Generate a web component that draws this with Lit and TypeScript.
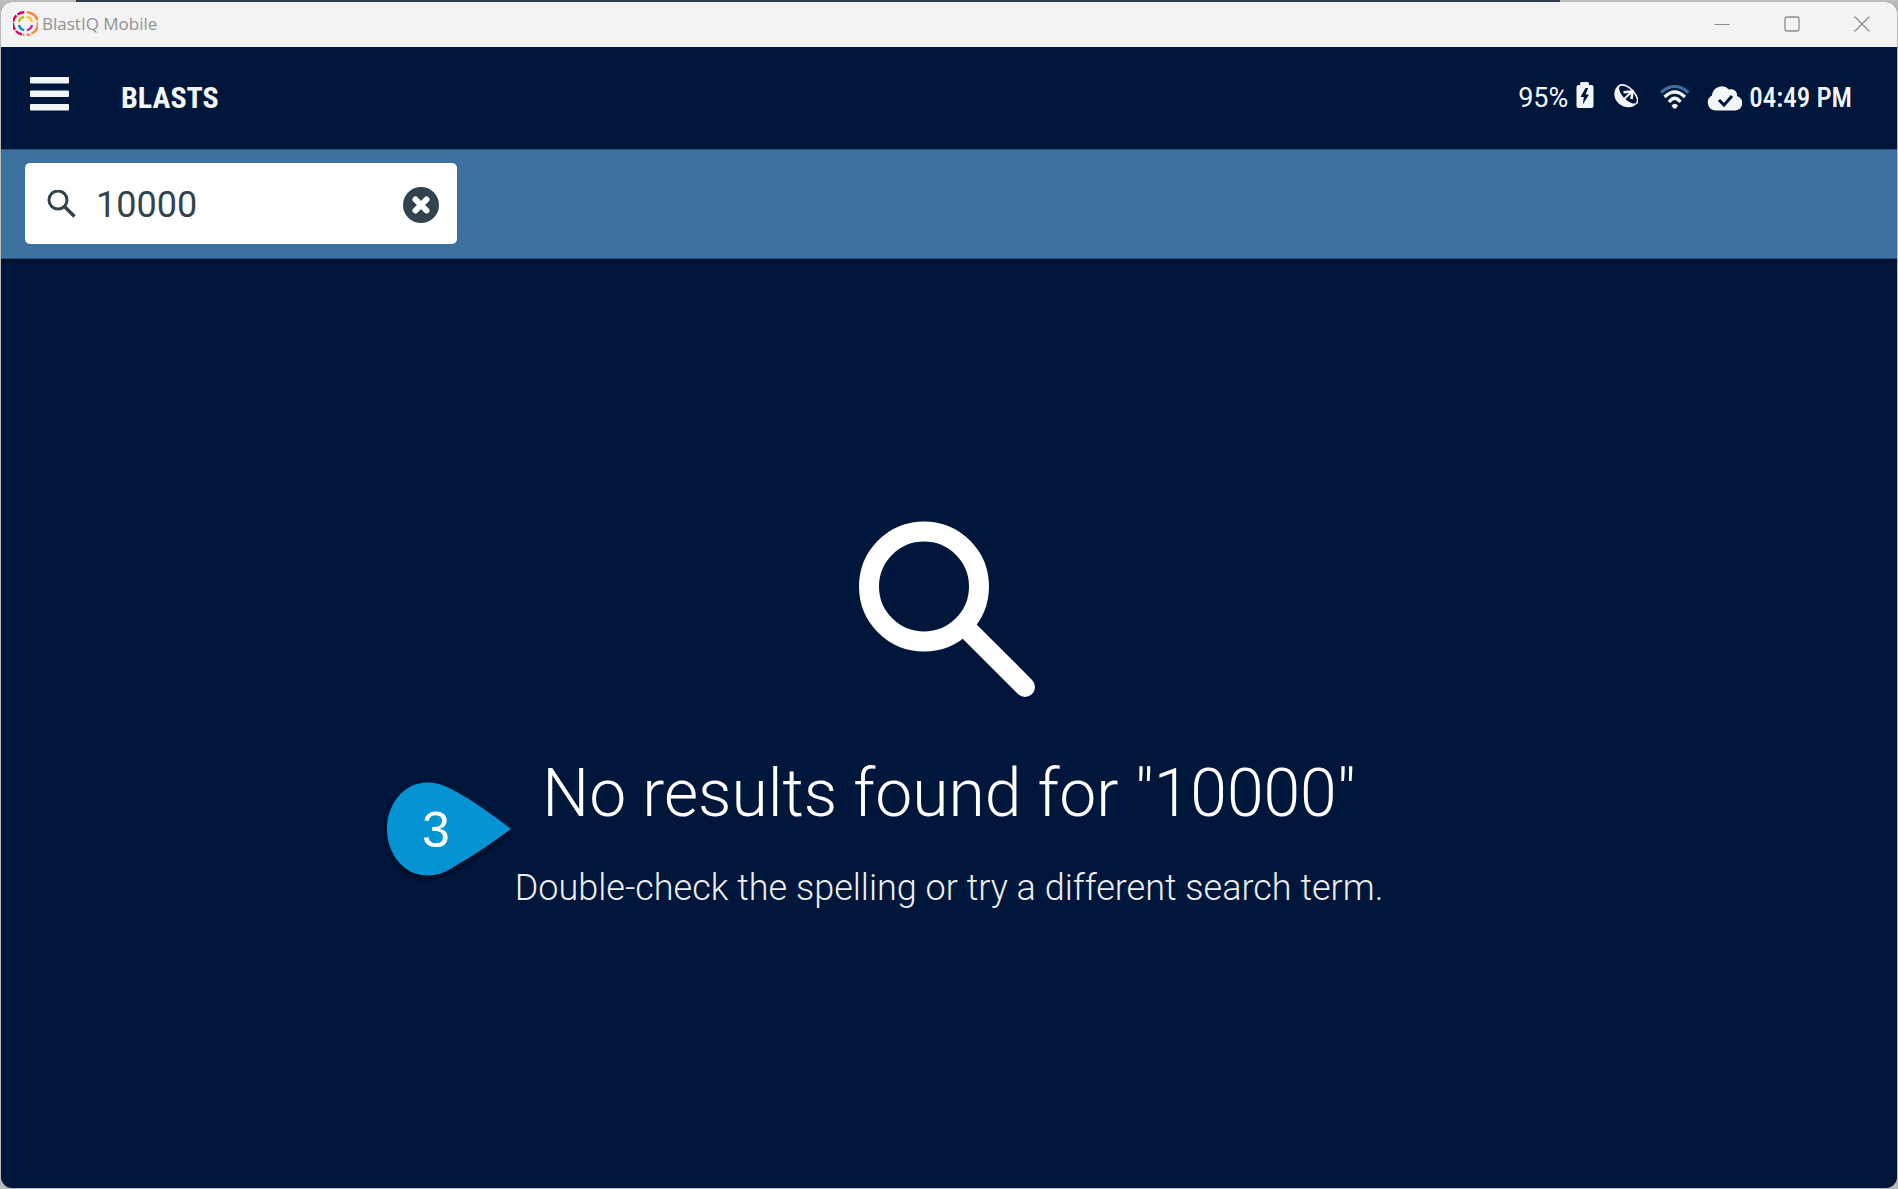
import { LitElement, html, css, svg } from "lit";
import { customElement, state } from "lit/decorators.js";

@customElement("window-title-bar")
class WindowTitleBar extends LitElement {
  static styles = css`
    :host {
      display: flex;
      align-items: center;
      justify-content: space-between;
      height: 45px;
      padding-left: 12px;
      background: #f3f3f3;
      color: #929292;
      font-family: "Open Sans", "Noto Sans", sans-serif;
      font-size: 17px;
      line-height: 24px;
    }
    .brand { display: flex; align-items: center; gap: 4px; padding-bottom: 2px; }
    .buttons { display: flex; padding-bottom: 2px; }
    button {
      display: grid;
      place-items: center;
      width: 70px;
      height: 43px;
      padding: 0;
      border: 0;
      background: none;
      color: #8d8d8d;
    }
    svg { display: block; }
  `;

  private control(label: string, shape: unknown) {
    return html`<button type="button" aria-label=${label}>
      <svg width="16" height="16" viewBox="0 0 16 16" fill="none" stroke="currentColor">${shape}</svg>
    </button>`;
  }

  render() {
    return html`
      <div class="brand">
        <svg width="25" height="25" viewBox="0 0 25 25" fill="none" stroke-width="2.4">
          <path d="M11.300 1.200A11.300 11.300 0 0 0 11.300 23.800" stroke="#d6045c" stroke-dasharray="7.200 1.400" />
          <path d="M13.700 1.200A11.300 11.300 0 0 1 13.700 23.800" stroke="#ff8236" stroke-dasharray="14.500 1.400" />
          <path d="M11.200 5.900A6.600 6.600 0 0 0 6 11" stroke="#b5bd00" />
          <path d="M13.800 5.900A6.600 6.600 0 0 1 19 11" stroke="#ffc629" />
          <path d="M11.200 19.100A6.600 6.600 0 0 1 6 14" stroke="#0092cf" />
          <path d="M13.800 19.100A6.600 6.600 0 0 0 19 14" stroke="#b62fa5" />
        </svg>
        <span>BlastIQ Mobile</span>
      </div>
      <div class="buttons">
        ${this.control("Minimize", svg`<path d="M0.500 8.500h15" />`)}
        ${this.control("Maximize", svg`<rect x="1" y="1" width="14" height="14" rx="1.500" stroke-width="1.300" />`)}
        ${this.control("Close", svg`<path d="M0.500 0.500l15 15M15.500 0.500l-15 15" stroke-width="1.300" />`)}
      </div>
    `;
  }
}

@customElement("status-header")
class StatusHeader extends LitElement {
  static styles = css`
    :host {
      display: flex;
      align-items: center;
      justify-content: space-between;
      height: 102px;
      padding: 0 45px 0 28px;
      color: #f2f6f8;
      font-family: "Roboto Condensed", Roboto, sans-serif;
    }
    .left { display: flex; align-items: center; gap: 52px; }
    button { padding: 0; border: 0; background: none; color: inherit; margin-bottom: 8px; }
    h1 { margin: 0; font-size: 30px; line-height: 32px; font-weight: 700; }
    .status { display: flex; align-items: center; font-size: 27px; line-height: 32px; font-weight: 500; }
    .percent { font-family: Roboto, sans-serif; font-weight: 400; }
    .battery { margin: 0 20px 6px 8px; }
    .satellite { margin: 0 22px 4px 0; }
    .wifi { margin: 0 17px 2px 0; }
    .cloud { margin-right: 7px; }
    svg { display: block; }
  `;

  render() {
    return html`
      <div class="left">
        <button type="button" aria-label="Menu">
          <svg width="40" height="34" viewBox="0 0 40 34" fill="currentColor">
            <rect x="1" y="0" width="39" height="6.500" rx="1" />
            <rect x="1" y="13.500" width="39" height="6.500" rx="1" />
            <rect x="1" y="27" width="39" height="6.500" rx="1" />
          </svg>
        </button>
        <h1>BLASTS</h1>
      </div>
      <div class="status">
        <span class="percent">95%</span>
        <svg class="battery" width="18" height="26" viewBox="0 0 18 26" fill="currentColor">
          <path d="M4 3V1.500Q4 0 5.500 0h6Q13 0 13 1.500V3h2.500Q17.500 3 17.500 5v19q0 2-2 2h-13Q0.500 26 0.500 24V5Q0.500 3 2.500 3z" />
          <path d="M9.500 6L4.500 15h3.300L6.800 22.500L13 12.500H9.600L12.200 6z" fill="#00163b" />
        </svg>
        <svg class="satellite" width="24" height="24" viewBox="0 0 24 24">
          <path d="M5 1C-1.500 5.500-1 15 5 19.700C11 24.500 19.500 24.300 23 19.500z" fill="currentColor" />
          <ellipse cx="14.600" cy="9.800" rx="12" ry="6.200" transform="rotate(46 14.600 9.800)" fill="#00163b" />
          <path d="M5 1.800C9-0.500 15 2 19 7C23 12 24.500 17 22.500 19.500" fill="none" stroke="currentColor" stroke-width="1.600" />
          <path d="M9.500 8.300L18.500 7.500L17.500 15" fill="none" stroke="currentColor" stroke-width="2.600" />
          <path d="M9.500 15.500L17.500 8" fill="none" stroke="currentColor" stroke-width="2" />
        </svg>
        <svg class="wifi" width="30" height="24" viewBox="0 0 30 24" fill="none" stroke-width="3">
          <path d="M1 7.500Q14.750-4.500 28.500 7.500" stroke="#3c709f" />
          <path d="M4.500 12Q14.750 2 25 12M9 17Q14.750 9.500 20.500 17" stroke="currentColor" stroke-width="3.300" />
          <path d="M11.500 20.500Q14.750 17 18 20.500L16 23.500h-2.500z" fill="currentColor" />
        </svg>
        <svg class="cloud" width="35" height="25" viewBox="0 0 35 25">
          <path d="M8 24.500A8 8 0 0 1 5 9.500A9.800 9.800 0 0 1 22 3.500A6 6 0 0 1 30 10A7.400 7.400 0 0 1 28 24.500z" fill="currentColor" />
          <path d="M12 14l5 5l8-9" fill="none" stroke="#00163b" stroke-width="3" />
        </svg>
        <time>04:49 PM</time>
      </div>
    `;
  }
}

@customElement("app-root")
class AppRoot extends LitElement {
  static styles = css`
    :host {
      display: flex;
      box-sizing: border-box;
      min-height: 100vh;
      padding-top: 2px;
      background: linear-gradient(90deg, #bdbdbd 4%, #2f3b50 4%, #2f3b50 82.200%, #bdbdbd 82.200%) top / 100% 2px no-repeat, #b9b9b9;
      font-family: Roboto, sans-serif;
    }
    .window {
      flex: 1;
      display: flex;
      flex-direction: column;
      margin: 0 1px 1px;
      border-radius: 11px;
      overflow: hidden;
      background: #00163b;
    }
    .toolbar {
      display: flex;
      padding: 13px 24px 14px;
      border-top: 1px solid #265581;
      border-bottom: 1px solid #265581;
      background: #3c709f;
      box-shadow: 0 2px 6px #00102a;
    }
    .search {
      display: flex;
      align-items: center;
      box-sizing: border-box;
      width: 432px;
      height: 81px;
      padding: 2px 18px 0 22px;
      border-radius: 5px;
      background: #ffffff;
      color: #30434f;
    }
    .search input {
      flex: 1;
      min-width: 0;
      margin-left: 20px;
      padding: 0;
      border: 0;
      outline: 0;
      background: none;
      color: inherit;
      font: 400 36px/48px Roboto, sans-serif;
    }
    .search button { padding: 0; border: 0; background: none; color: inherit; }
    svg { display: block; }
    .empty {
      flex: 1;
      display: flex;
      flex-direction: column;
      align-items: center;
      padding-top: 262px;
      color: #ffffff;
      text-align: center;
    }
    h2 { margin: 56px 0 0; font-size: 66px; line-height: 80px; font-weight: 300; }
    .hint { position: relative; }
    p { margin: 30px 0 0; color: #eceff1; font-size: 36px; line-height: 48px; font-weight: 300; }
    .callout {
      position: absolute;
      left: -128px;
      top: -52px;
      width: 124px;
      height: 94px;
      filter: drop-shadow(0 3px 3px #000a1c);
    }
    .callout text { font: 50px "Liberation Sans", sans-serif; fill: #ffffff; }
  `;

  @state() private query = "10000";

  private onInput(event: Event) {
    this.query = (event.target as HTMLInputElement).value;
  }

  render() {
    return html`
      <div class="window">
        <window-title-bar></window-title-bar>
        <status-header></status-header>
        <div class="toolbar">
          <div class="search">
            <svg width="29" height="29" viewBox="0 0 29 29" fill="none" stroke="currentColor" stroke-width="3">
              <circle cx="11" cy="10" r="9" />
              <path d="M17.500 16.500l10 10" stroke-width="3.500" />
            </svg>
            <input type="text" aria-label="Search blasts" .value=${this.query} @input=${this.onInput} />
            <button type="button" aria-label="Clear search" @click=${() => (this.query = "")}>
              <svg width="36" height="36" viewBox="0 0 36 36">
                <circle cx="18" cy="18" r="18" fill="currentColor" />
                <path d="M12.500 12.500l11 11M23.500 12.500l-11 11" stroke="#ffffff" stroke-width="6" stroke-linecap="round" />
              </svg>
            </button>
          </div>
        </div>
        <main class="empty">
          <svg width="184" height="177" viewBox="0 0 184 177" fill="none" stroke="#ffffff" stroke-width="20">
            <circle cx="67" cy="65.500" r="55" />
            <path d="M107 105l61 61" stroke-linecap="round" />
          </svg>
          <h2>No results found for "${this.query}"</h2>
          <div class="hint">
            <p>Double-check the spelling or try a different search term.</p>
            <svg class="callout" viewBox="0 0 124 94" role="img" aria-label="Step 3">
              <path d="M40 0.500C52 0.500 62 5.500 68 9C88 20 106 33 124 47C106 60 88 73 68 84C60 89.500 52 93.500 40 93.500C18 93.500 0 73 0 47C0 21 18 0.500 40 0.500z" fill="#0494d3" />
              <text x="35" y="65">3</text>
            </svg>
          </div>
        </main>
      </div>
    `;
  }
}
